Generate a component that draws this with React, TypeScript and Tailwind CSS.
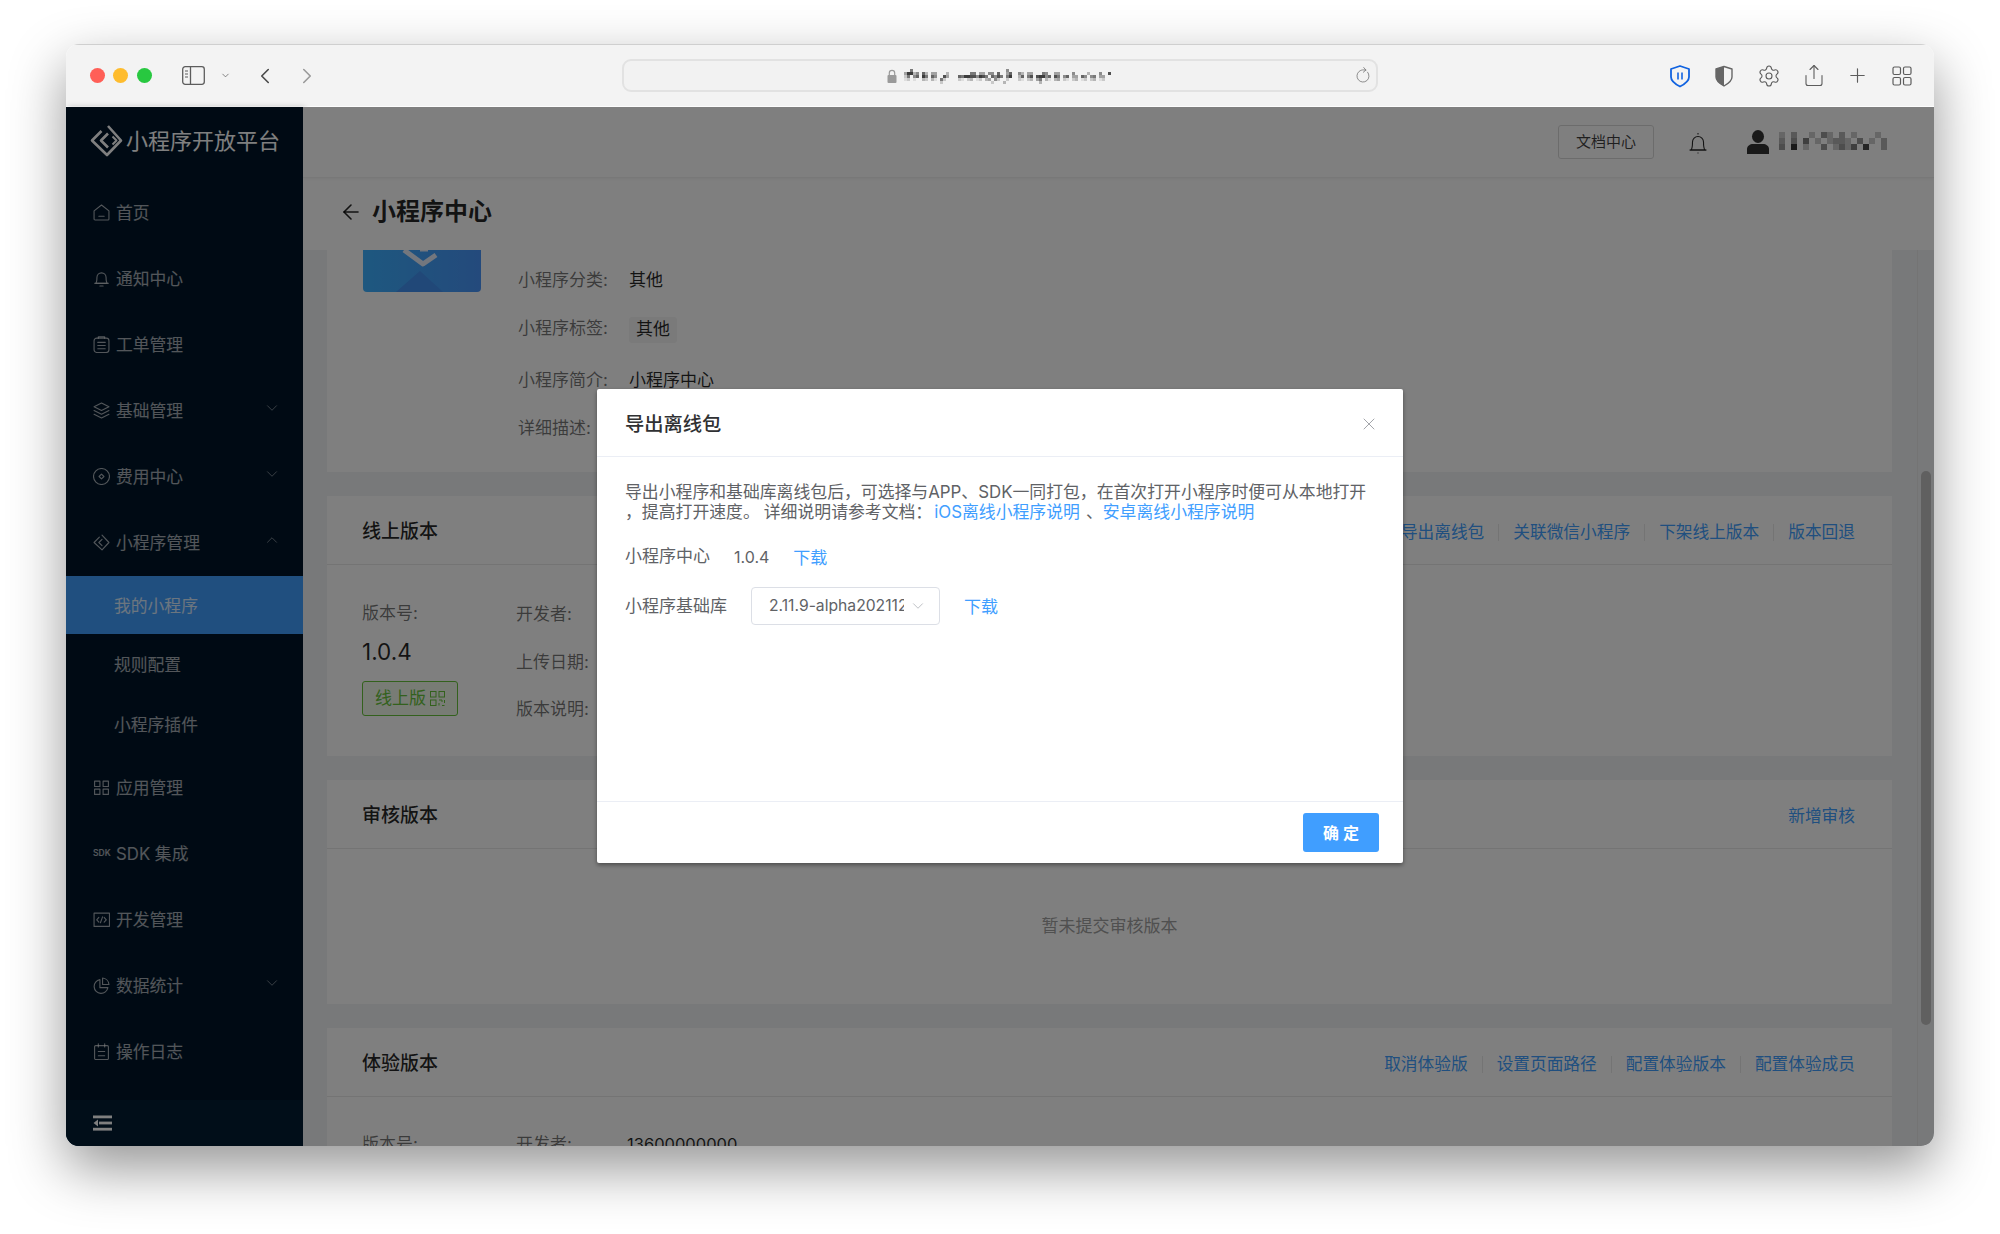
import React from "react";
import { Settings, Share, Plus, ArrowLeft, ChevronDown, ChevronUp, ChevronLeft, ChevronRight, X, RotateCw } from "lucide-react";

const S = { fill: "none", stroke: "currentColor", strokeWidth: 1.05, strokeLinecap: "round", strokeLinejoin: "round" } as const;

function Ic({ children, size = 17 }: { children: React.ReactNode; size?: number }) {
  return (
    <svg width={size} height={size} viewBox="0 0 16 16" {...S} className="shrink-0">
      {children}
    </svg>
  );
}

const icons: Record<string, React.ReactNode> = {
  home: <Ic><path d="M1 6.500 8 1l7 5.500V14a1 1 0 0 1-1 1H2a1 1 0 0 1-1-1z" /><path d="M5.500 11.500h5" /></Ic>,
  bell: <Ic><path d="M2.500 12.500c1-1 1.200-2 1.200-5.500a4.300 4.300 0 0 1 8.600 0c0 3.500.2 4.500 1.200 5.500z" /><path d="M1.500 12.500h13M6.500 15h3" /></Ic>,
  list: <Ic><rect x="1" y="2" width="14" height="13.500" rx="2.500" /><path d="M5 2V.8h6V2M4.500 6h7M4.500 9h7M4.500 12h7" /></Ic>,
  layers: <Ic><path d="m8 1 7 3.500L8 8 1 4.500z" /><path d="m1 8 7 3.500L15 8M1 11.500 8 15l7-3.500" /></Ic>,
  fee: <Ic><circle cx="8" cy="8" r="7.500" /><path d="m8 5.700 2.300 2.300L8 10.300 5.700 8z" /></Ic>,
  mini: <Ic><path d="M8.500 1 15 8l-6.500 7L1 8 6 3" /><path d="M8.500 5 5.500 8l3 3" /></Ic>,
  grid: <Ic><rect x="1.500" y="2" width="5" height="5" /><rect x="9.500" y="2" width="5" height="5" /><rect x="1.500" y="9.500" width="5" height="5" /><rect x="9.500" y="9.500" width="5" height="5" /></Ic>,
  code: <Ic><rect x="1" y="2" width="14.500" height="12.500" /><path d="m5.500 6-2 2.300 2 2.200M10.500 6l2 2.300-2 2.200M9 5.500 7 11" /></Ic>,
  pie: <Ic><path d="M6.500 2.500a6.500 6.500 0 1 0 7.500 7.500H6.500z" /><path d="M9 1a6.500 6.500 0 0 1 6 6H9z" /></Ic>,
  log: <Ic><rect x="1.500" y="2.500" width="13" height="13" rx="1" /><path d="M5 .8v3M11 .8v3M5 8h6M5 12h6" /></Ic>,
};

type Item = { label: string; icon?: string; chevron?: "down" | "up"; sdk?: boolean };

function MenuRow({ item }: { item: Item }) {
  return (
    <div className="flex h-[66px] items-center pl-[27px] pr-[22px] text-[16.800px] text-white/65">
      {item.sdk ? (
        <span className="w-[17px] shrink-0 text-[8.500px] font-semibold leading-none">SDK</span>
      ) : (
        icons[item.icon!]
      )}
      <span className="ml-[6px] flex-1 pt-[4px]">{item.label}</span>
      {item.chevron === "down" && <ChevronDown size={18} strokeWidth={1} className="-mt-[5px] text-white/60" />}
      {item.chevron === "up" && <ChevronUp size={18} strokeWidth={1} className="-mt-[5px] text-white/60" />}
    </div>
  );
}

function Sidebar() {
  const top: Item[] = [
    { label: "首页", icon: "home" },
    { label: "通知中心", icon: "bell" },
    { label: "工单管理", icon: "list" },
    { label: "基础管理", icon: "layers", chevron: "down" },
    { label: "费用中心", icon: "fee", chevron: "down" },
    { label: "小程序管理", icon: "mini", chevron: "up" },
  ];
  const bottom: Item[] = [
    { label: "应用管理", icon: "grid" },
    { label: "SDK 集成", sdk: true },
    { label: "开发管理", icon: "code" },
    { label: "数据统计", icon: "pie", chevron: "down" },
    { label: "操作日志", icon: "log" },
  ];
  return (
    <aside className="flex w-[237px] shrink-0 flex-col bg-[#001529] shadow-[2px_0_6px_rgba(0,0,0,0.2)]">
      <div className="flex h-[72px] shrink-0 items-center pb-[5px] pl-[24px] text-white">
        <svg width="33" height="33" viewBox="0 0 33 33" fill="none" stroke="currentColor" strokeWidth="2.600" strokeLinejoin="round" className="shrink-0">
          <path d="M18 2 31 16.500 17 31 2 16.500 11.500 7" />
          <path d="M18 9.500 11 16.500l7 7" />
          <path d="M22.500 12.500l4 4-4 4" strokeWidth="2" />
        </svg>
        <span className="ml-[3px] text-[22px] leading-none">小程序开放平台</span>
      </div>
      {top.map((i) => <MenuRow key={i.label} item={i} />)}
      <div className="mt-[1px] text-[16.800px]">
        <div className="flex h-[58px] items-center bg-[#409eff] pl-[48px] pt-[4px] text-white/80">我的小程序</div>
        <div className="flex h-[60px] items-center pl-[48px] pt-[4px] text-white/65">规则配置</div>
        <div className="flex h-[60px] items-center pl-[48px] pt-[4px] text-white/65">小程序插件</div>
      </div>
      {bottom.map((i) => <MenuRow key={i.label} item={i} />)}
      <div className="mt-auto flex h-[46px] items-center bg-[#021d33] pl-[27px] text-white">
        <svg width="19" height="16" viewBox="0 0 19 16" fill="currentColor">
          <rect x="0" y="0.500" width="19" height="2.800" />
          <rect x="6" y="6.600" width="13" height="2.800" />
          <rect x="0" y="12.800" width="19" height="2.800" />
          <path d="M5 4.500v7L.5 8z" />
        </svg>
      </div>
    </aside>
  );
}

function Mosaic({ rows, cw, ch, color }: { rows: string[]; cw: number; ch: number; color: string }) {
  const cols = Math.max(...rows.map((r) => r.length));
  const w = cols * cw;
  const h = rows.length * ch;
  return (
    <svg width={w} height={h} viewBox={`0 0 ${w} ${h}`} className="shrink-0 blur-[0.7px]">
      {rows.flatMap((r, y) =>
        r.split("").map((c, x) =>
          c === "." ? null : <rect key={`${x}-${y}`} x={x * cw} y={y * ch} width={cw} height={ch} fill={color} fillOpacity={Number(c) / 9} />
        )
      )}
    </svg>
  );
}

function Toolbar() {
  return (
    <div className="flex h-[63px] shrink-0 items-center border-t border-b border-t-[#cfcfcf] border-b-white bg-[#f3f3f3] pl-[23.500px] text-[#5c5c5c]">
      <div className="flex gap-[8.500px]">
        <span className="h-[15px] w-[15px] rounded-full bg-[#ff5f57]" />
        <span className="h-[15px] w-[15px] rounded-full bg-[#febc2e]" />
        <span className="h-[15px] w-[15px] rounded-full bg-[#28c840]" />
      </div>
      <svg width="23" height="19" viewBox="0 0 23 19" fill="none" stroke="currentColor" strokeWidth="1.300" className="ml-[30.500px] shrink-0">
        <rect x="0.700" y="0.700" width="21.600" height="17.600" rx="2.500" />
        <path d="M8.500 1v17" />
        <path d="M3 5h3M3 8h3M3 11h3" strokeWidth="1.200" />
      </svg>
      <ChevronDown size={11} strokeWidth={1.600} className="ml-[15px]" />
      <ChevronLeft size={26} strokeWidth={1.500} className="ml-[21px] text-[#4a4a4a]" />
      <ChevronRight size={26} strokeWidth={1.500} className="ml-[16px] text-[#9a9a9a]" />
      <div className="ml-[302px] flex h-[33px] w-[756px] shrink-0 items-center rounded-[9px] border-2 border-[#e2e2e2] bg-[#f2f2f2] pl-[263px]">
        <svg width="10" height="14" viewBox="0 0 10 14" className="shrink-0">
          <path d="M2.300 6V4a2.700 2.700 0 0 1 5.400 0v2" fill="none" stroke="#9a9a9a" strokeWidth="1.200" />
          <rect x="0.500" y="6" width="9" height="8" rx="1" fill="#9a9a9a" />
        </svg>
        <div className="ml-[1px] mt-[1px]">
          <Mosaic
            cw={3}
            ch={3}
            color="#3c3c3c"
            rows={[
              "....6...............................5.................................",
              "..49935.73.44...3.......66.44.55.7..47..53.44...65..44....5....3...5..8",
              "..26.57.96.75..84...7699885986.7586.69..37.68.89957.86.57.44.75.56.44.",
              "..12.1..32.31.62....21.23.12.34.52..2...21.23.46.31.34.21.23.12.23.12.",
              "..............2................2...3...........3......................",
            ]}
          />
        </div>
        <RotateCw size={16} strokeWidth={1} className="ml-auto mr-[5px] rotate-[-40deg] text-[#666]" />
      </div>
      <svg width="24" height="24" viewBox="0 0 24 24" fill="none" className="ml-[290px] shrink-0">
        <path d="M12 2 21 5v8c0 4-4 7-9 9.500C7 20 3 17 3 13V5z" stroke="#1163e0" strokeWidth="1.800" strokeLinejoin="round" />
        <path d="M10 8.500v7M14 8.500v7" stroke="#1163e0" strokeWidth="1.600" />
      </svg>
      <svg width="24" height="24" viewBox="0 0 24 24" fill="none" className="ml-[20px] shrink-0">
        <path d="M12 2.500 20 5v8c0 4-3.500 6.500-8 9-4.500-2.500-8-5-8-9V5z" stroke="#666" strokeWidth="1.400" strokeLinejoin="round" />
        <path d="M12 2.500V22c-4.500-2.500-8-5-8-9V5z" fill="#666" />
      </svg>
      <span className="ml-[21px] flex w-[24px] shrink-0 justify-center"><Settings size={24} strokeWidth={1.100} /></span>
      <span className="ml-[21px] flex w-[24px] shrink-0 justify-center"><Share size={27} strokeWidth={1.100} /></span>
      <span className="ml-[19px] flex w-[24px] shrink-0 justify-center"><Plus size={23} strokeWidth={1.200} /></span>
      <svg width="20" height="20" viewBox="0 0 20 20" fill="none" stroke="currentColor" strokeWidth="1.200" className="ml-[23px] shrink-0">
        <rect x="1" y="1" width="7.500" height="7.500" rx="1.500" />
        <rect x="11.500" y="1" width="7.500" height="7.500" rx="1.500" />
        <rect x="1" y="11.500" width="7.500" height="7.500" rx="1.500" />
        <rect x="11.500" y="11.500" width="7.500" height="7.500" rx="1.500" />
      </svg>
    </div>
  );
}

function Links({ items }: { items: string[] }) {
  return (
    <div className="flex items-center text-[16.700px] text-[#409eff]">
      {items.map((t, i) => (
        <React.Fragment key={t}>
          {i > 0 && <span className="mx-[14px] h-[17px] w-px bg-[#e8e8e8]" />}
          <span>{t}</span>
        </React.Fragment>
      ))}
    </div>
  );
}

function CardHead({ title, links }: { title: string; links: string[] }) {
  return (
    <div className="flex h-[69px] shrink-0 items-center justify-between border-b border-[#e8e8e8] pl-[35px] pr-[37px] pt-[5px]">
      <span className="text-[19px] font-medium text-black/85">{title}</span>
      <Links items={links} />
    </div>
  );
}

const Label = ({ children, className = "" }: { children: React.ReactNode; className?: string }) => (
  <div className={`h-[24px] whitespace-nowrap leading-[24px] text-black/55 ${className}`}>{children}</div>
);

function Content() {
  return (
    <div className="flex min-w-0 flex-1 flex-col overflow-hidden bg-[#f0f2f5] pl-[24px] pr-[25px] text-[17px]">
      <section className="flex h-[222px] shrink-0 bg-white pl-[36px]">
        <svg width="118" height="42" viewBox="0 0 118 42" className="shrink-0">
          <defs>
            <linearGradient id="appg" x1="0" x2="1" y1="0" y2="0">
              <stop offset="0" stopColor="#3cb0ff" />
              <stop offset="1" stopColor="#4894f8" />
            </linearGradient>
          </defs>
          <path d="M0 0h118v38a4 4 0 0 1-4 4H4a4 4 0 0 1-4-4z" fill="url(#appg)" />
          <path d="M57 21 80 42H33z" fill="#4290f0" />
          <path d="M41 0 60 14 73 5" fill="none" stroke="#e6eefc" strokeWidth="5" strokeLinejoin="round" />
          <path d="M57 0h8" stroke="#e6eefc" strokeWidth="3" />
        </svg>
        <div className="ml-[37px] flex flex-col">
          <div className="mt-[18px] flex"><Label className="w-[111px]">小程序分类:</Label><span className="leading-[24px] text-black/85">其他</span></div>
          <div className="mt-[25px] flex items-center">
            <Label className="w-[111px] -mt-[4px]">小程序标签:</Label>
            <span className="flex h-[26px] w-[48px] items-center justify-center rounded-[3px] bg-[#f5f5f5] text-black/85">其他</span>
          </div>
          <div className="mt-[25px] flex"><Label className="w-[111px]">小程序简介:</Label><span className="leading-[24px] text-black/85">小程序中心</span></div>
          <div className="mt-[24px] flex"><Label className="w-[111px]">详细描述:</Label></div>
        </div>
      </section>

      <section className="mt-[24px] flex h-[260px] shrink-0 flex-col bg-white">
        <CardHead title="线上版本" links={["导出离线包", "关联微信小程序", "下架线上版本", "版本回退"]} />
        <div className="flex pl-[35px]">
          <div className="flex w-[154px] flex-col items-start pt-[36px]">
            <Label>版本号:</Label>
            <div className="mt-[11px] h-[32px] text-[22.500px] leading-[32px] text-black/85">1.0.4</div>
            <div className="mt-[13px] flex h-[35px] w-[96px] items-center justify-center gap-[4px] rounded-[3px] border border-[#67c23a] bg-[#f0f9eb] text-[#67c23a]">
              <span>线上版</span>
              <svg width="15" height="15" viewBox="0 0 15 15" fill="none" stroke="currentColor" strokeWidth="1">
                <rect x=".5" y=".5" width="5.500" height="5.500" />
                <rect x="9" y=".5" width="5.500" height="5.500" />
                <rect x=".5" y="9" width="5.500" height="5.500" />
                <path d="M9 9h3v2M14.500 9v3M9 12v2.500M12 14.500h2.500" />
              </svg>
            </div>
          </div>
          <div className="flex flex-col pt-[37px]">
            <Label>开发者:</Label>
            <Label className="mt-[24px]">上传日期:</Label>
            <Label className="mt-[23px]">版本说明:</Label>
          </div>
        </div>
      </section>

      <section className="mt-[24px] flex h-[224px] shrink-0 flex-col bg-white">
        <CardHead title="审核版本" links={["新增审核"]} />
        <div className="flex flex-1 items-center justify-center text-[#a0a0a0]">暂未提交审核版本</div>
      </section>

      <section className="mt-[24px] flex h-[200px] shrink-0 flex-col bg-white">
        <CardHead title="体验版本" links={["取消体验版", "设置页面路径", "配置体验版本", "配置体验成员"]} />
        <div className="flex pl-[35px] pt-[35px]">
          <Label className="w-[154px]">版本号:</Label>
          <Label className="w-[111px]">开发者:</Label>
          <span className="text-[16.500px] leading-[24px] text-black/85">13600000000</span>
        </div>
      </section>
    </div>
  );
}

function Modal() {
  return (
    <div className="absolute left-[531px] top-[345px] flex h-[474px] w-[806px] flex-col rounded-[2px] bg-white text-[17px] text-[#606266] shadow-[0_2px_4px_rgba(0,0,0,0.4)]">
      <div className="flex h-[68px] shrink-0 items-center justify-between border-b border-[#ebeef5] pl-[28px] pr-[24px] pt-[4px]">
        <span className="text-[19.300px] font-medium text-[#303133]">导出离线包</span>
        <X size={20} strokeWidth={1} className="-mt-[2px] text-[#909399]" />
      </div>
      <div className="flex-1 px-[28px] pt-[25px]">
        <p className="whitespace-nowrap text-[16.850px] leading-[20px]">
          导出小程序和基础库离线包后，可选择与APP、SDK一同打包，在首次打开小程序时便可从本地打开
          <br />
          ，提高打开速度。<span className="ml-[4px]">详细说明请参考文档：</span><span className="ml-[2px] text-[#409eff]">iOS离线小程序说明</span>
          <span className="ml-[6px]">、</span>
          <span className="text-[#409eff]">安卓离线小程序说明</span>
        </p>
        <div className="mt-[23px] flex h-[24px] items-center">
          <span>小程序中心</span>
          <span className="ml-[24px] text-[16px]">1.0.4</span>
          <span className="ml-[24px] pt-[3px] text-[#409eff]">下载</span>
        </div>
        <div className="mt-[18px] flex items-center">
          <span className="w-[126px] pt-[2px]">小程序基础库</span>
          <div className="flex h-[38px] w-[189px] items-center rounded-[4px] border border-[#dcdfe6] pl-[17px] pr-[12px] text-[15.700px]">
            <span className="w-[135px] overflow-hidden whitespace-nowrap">2.11.9-alpha202112</span>
            <ChevronDown size={18} strokeWidth={1} className="ml-auto text-[#a8abb2]" />
          </div>
          <span className="ml-[24px] pt-[3px] text-[#409eff]">下载</span>
        </div>
      </div>
      <div className="flex h-[62px] shrink-0 items-start justify-end border-t border-[#ebeef5] pr-[24px] pt-[11px]">
        <button className="flex h-[39px] w-[76px] items-center justify-center rounded-[3px] bg-[#409eff] text-[16px] font-semibold text-white">确 定</button>
      </div>
    </div>
  );
}

export default function App() {
  return (
    <div className="h-[1234px] w-[2000px] overflow-hidden bg-white pl-[66px] pt-[44px] font-[Inter,'Noto_Sans_CJK_SC',sans-serif]">
      <div className="relative flex h-[1102px] w-[1868px] flex-col overflow-hidden rounded-[13px] shadow-[0_22px_55px_rgba(0,0,0,0.42)]">
        <Toolbar />
        <div className="flex min-h-0 flex-1">
          <Sidebar />
          <main className="flex min-w-0 flex-1 flex-col bg-white">
            <header className="flex h-[71px] shrink-0 items-center justify-end border-b border-[#f0f0f0] pr-[47px] shadow-[0_1px_3px_rgba(0,0,0,0.06)]">
              <span className="flex h-[34px] w-[96px] items-center justify-center rounded-[3px] border border-[#d9d9d9] text-[15px] text-black/75">文档中心</span>
              <svg width="22" height="24" viewBox="0 0 22 24" fill="none" stroke="#262626" strokeWidth="1.100" className="ml-[33px] mt-[2px] shrink-0">
                <path d="M4 19c1.500-1.500 1.500-4 1.500-8a5.500 5.500 0 0 1 11 0c0 4 0 6.500 1.500 8z" />
                <path d="M2.500 19h17M11 3.500V2M10.500 22h1" />
              </svg>
              <svg width="22" height="24" viewBox="0 0 22 24" fill="#333" className="ml-[38px] shrink-0">
                <ellipse cx="11" cy="6.500" rx="6" ry="6.500" />
                <path d="M0 24v-5c0-3 3-5 6-5h10c3 0 6 2 6 5v5z" />
              </svg>
              <div className="ml-[10px] -mt-[3px]">
                <Mosaic
                  cw={6}
                  ch={6}
                  color="#1a1a1a"
                  rows={[
                    "2.3..2.42.3.2...2.",
                    "3.4.5.2.2332.4.2.3",
                    "4.8.2..4.2425.7..3",
                  ]}
                />
              </div>
            </header>
            <div className="flex h-[72px] shrink-0 items-center pb-[4px] pl-[36px] text-black/85">
              <ArrowLeft size={24} strokeWidth={1.600} />
              <span className="ml-[9px] text-[24px] font-semibold">小程序中心</span>
            </div>
            <div className="flex min-h-0 flex-1">
              <Content />
              <div className="w-[17px] shrink-0 border-l border-[#e8e8e8] bg-[#f0f2f5] pl-[3px] pt-[221px]">
                <div className="h-[554px] w-[10px] rounded-full bg-[#c1c1c1]" />
              </div>
            </div>
          </main>
        </div>
        <div className="absolute inset-x-0 bottom-0 top-[63px] bg-black/50" />
        <Modal />
      </div>
    </div>
  );
}
